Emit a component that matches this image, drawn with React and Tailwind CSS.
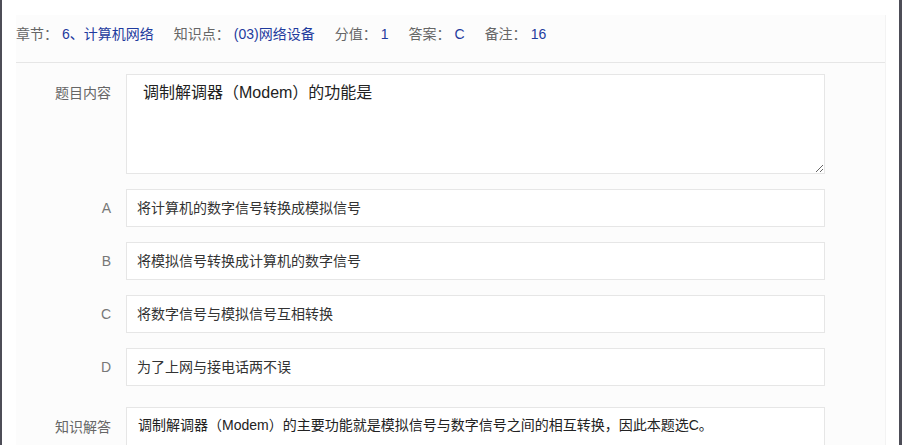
const meta = [
  { label: '章节：', value: '6、计算机网络' },
  { label: '知识点：', value: '(03)网络设备' },
  { label: '分值：', value: '1' },
  { label: '答案：', value: 'C' },
  { label: '备注：', value: '16' },
];

const options = [
  { key: 'A', text: '将计算机的数字信号转换成模拟信号' },
  { key: 'B', text: '将模拟信号转换成计算机的数字信号' },
  { key: 'C', text: '将数字信号与模拟信号互相转换' },
  { key: 'D', text: '为了上网与接电话两不误' },
];

export default function App() {
  return (
    <div
      className="h-[445px] overflow-hidden bg-white border-l-2 border-r-[3px] border-[#4d4d57] pl-[14px] pr-[13px] pt-[15px]"
      style={{ fontFamily: '"Liberation Sans", "Noto Sans CJK SC", sans-serif' }}
    >
      <div className="bg-[#fcfcfc] border-r border-[#f3f3f3] h-full">
        {/* header info */}
        <div className="flex items-center pt-[10px] pb-[19px] border-b border-[#e6e6e6] text-[14px] leading-[18px]">
          {meta.map(m => (
            <div key={m.label} className="flex items-center mr-[20px]">
              <span className="text-[#666]">{m.label}</span>
              <span className="text-[#1f3b9e] ml-[4px]">{m.value}</span>
            </div>
          ))}
        </div>

        <div className="pt-[11px] pr-[60px]">
          {/* question */}
          <div className="flex">
            <div className="w-[96px] shrink-0 pr-[1px] text-right text-[14px] leading-[20px] pt-[9px] text-[#666]">题目内容</div>
            <textarea
              readOnly
              className="ml-[14px] flex-1 h-[100px] bg-white border border-[#e6e6e6] px-[16px] pt-[8px] text-[16px] leading-[20px] text-[#222] outline-none"
              defaultValue="调制解调器（Modem）的功能是"
              style={{ fontFamily: '"Liberation Sans", "Noto Sans CJK SC", sans-serif' }}
            />
          </div>

          {/* options */}
          {options.map(o => (
            <div key={o.key} className="flex items-center mt-[15px]">
              <div className="w-[96px] shrink-0 pr-[1px] text-right text-[14px] text-[#777]">{o.key}</div>
              <div className="ml-[14px] flex-1 h-[38px] flex items-center bg-white border border-[#e6e6e6] px-[10px] text-[14px] text-[#333]">
                {o.text}
              </div>
            </div>
          ))}

          {/* answer */}
          <div className="flex mt-[21px]">
            <div className="w-[96px] shrink-0 pr-[1px] text-right text-[14px] leading-[20px] pt-[10px] text-[#666]">知识解答</div>
            <div className="ml-[14px] flex-1 h-[80px] bg-white border border-[#e6e6e6] px-[11px] pt-[7px] text-[14px] leading-[20px] text-[#222]">
              调制解调器（Modem）的主要功能就是模拟信号与数字信号之间的相互转换，因此本题选C。
            </div>
          </div>
        </div>
      </div>
    </div>
  );
}
